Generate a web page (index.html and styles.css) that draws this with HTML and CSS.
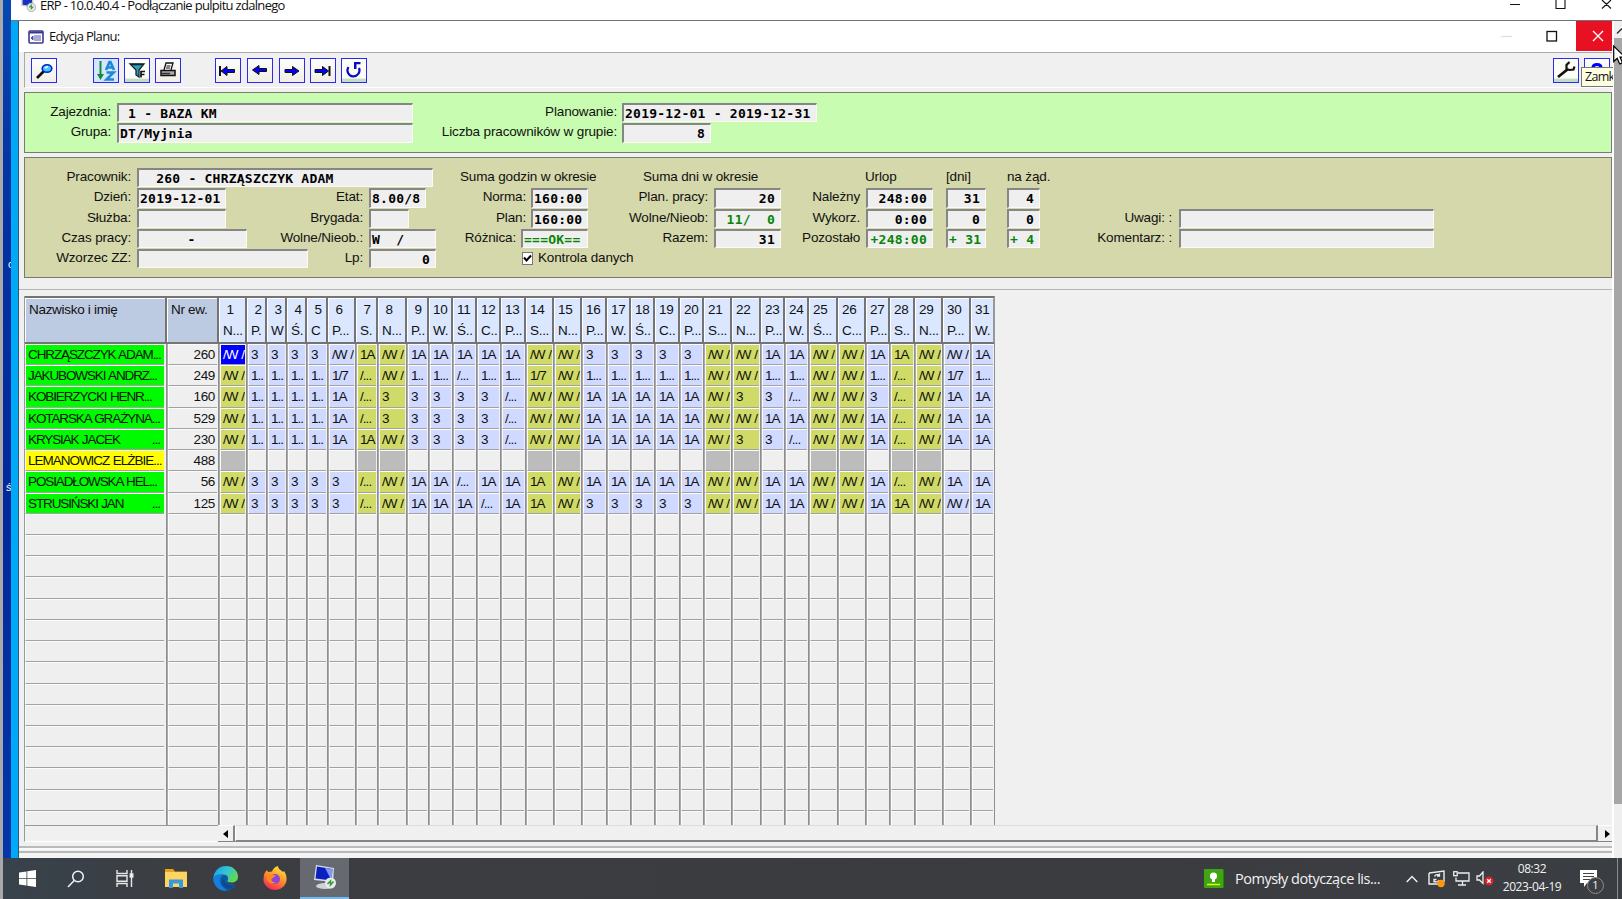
FILE: index.html
```html
<!DOCTYPE html>
<html lang="pl">
<head>
<meta charset="utf-8">
<title>ERP - Edycja Planu</title>
<link rel="stylesheet" href="styles.css">
</head>
<body>
<div class="screen">
  <div class="desktop">
    <div class="edge-gray"></div>
    <div class="wallpaper"><span class="wp-letter wp-a">c</span><span class="wp-letter wp-b">ś</span></div>
    <div class="rdp">
      <header class="rdp-title">
        <svg class="rdp-icon" width="16" height="16" viewBox="0 0 24 24"><path d="M2 1l18 3v13L2 15z" fill="#c8cdd8"/><path d="M4 3l14 3v9L4 13z" fill="#1b2fc4"/><circle cx="17" cy="17" r="6.5" fill="#e4e9e4" stroke="#999"/><path d="M14 17l3-3v5l3-3" fill="none" stroke="#2d9b3c" stroke-width="1.6"/></svg>
        <span class="rdp-text">ERP - 10.0.40.4 - Podłączanie pulpitu zdalnego</span>
        <svg class="rdp-buttons" width="112" height="20" viewBox="0 0 112 20" fill="none" stroke="#111" stroke-width="1.1"><path d="M5 4.500h10M51 -1v9.500h9v-9.500M97 0l9 8.500M106 0l-9 8.500"/></svg>
      </header>
      <div class="session">
        <div class="cyan"></div>
        <main class="app">
          <header class="app-title">
            <svg width="16" height="14" viewBox="0 0 16 14"><rect x="1" y="1" width="14" height="12" rx="1" fill="#fff" stroke="#3a3a94" stroke-width="1.6"/><path d="M1 2.500h14" stroke="#3a3a94" stroke-width="2"/><path d="M3 8l2-2v4zM6 6h7M6 8h7M6 10h7" stroke="#5558a8" fill="#3a3a94"/></svg>
            <span class="app-text">Edycja Planu:</span>
            <svg class="app-min" width="60" height="30" viewBox="0 0 60 30" fill="none"><path d="M1 14.500h11" stroke="#ddd" stroke-width="1.2"/><rect x="47" y="9.500" width="9.500" height="9.500" stroke="#111" stroke-width="1.3"/></svg>
            <div class="app-close"><svg width="12" height="12" viewBox="0 0 12 12"><path d="M1 1l10 10M11 1L1 11" stroke="#fff" stroke-width="1.3"/></svg></div>
          </header>

          <nav class="toolbar">
            <button class="tool t1"><svg viewBox="0 0 22 22"><path d="M4 18l7-7" stroke="#111" stroke-width="2.600"/><ellipse cx="14" cy="8.500" rx="4.800" ry="3.800" fill="#3cf" stroke="#0a1fd0" stroke-width="1.600"/><path d="M12 8l3-1.500" stroke="#fff" stroke-width="1.500"/></svg></button>
            <button class="tool t2 blue"><svg viewBox="0 0 22 22"><path d="M5.500 1v15" stroke="#168a3a" stroke-width="2"/><path d="M2 14h7l-3.500 6z" fill="#168a3a"/><path d="M11 10l3.500-8h1L19 10M12.500 7.500h5M11.500 12.500h7l-7 7h7.500" fill="none" stroke="#1e88d8" stroke-width="2.600"/></svg></button>
            <button class="tool t3 foot"><svg viewBox="0 0 22 22"><path d="M4 4h14l-5 6v7l-3-2v-5z" fill="#2ba0b8" stroke="#123" stroke-width="1.300"/><path d="M5 4.500h12" stroke="#123" stroke-width="1.600"/><path d="M15 17.500v-6h4M15 14.500h3.500" fill="none" stroke="#111" stroke-width="1.700"/></svg></button>
            <button class="tool t4"><svg viewBox="0 0 22 22"><path d="M7 10l2-7h7l-2 7" fill="#fff" stroke="#111" stroke-width="1.300"/><path d="M9.500 6h4M9 8h4" stroke="#111"/><path d="M4 10.500h14v5H4z" fill="#aaa" stroke="#111" stroke-width="1.500"/><path d="M5 13.500h8" stroke="#333" stroke-width="1.500"/></svg></button>
            <button class="tool t5"><svg viewBox="0 0 22 22"><path d="M3 6v10" stroke="#111" stroke-width="2"/><path d="M4 11l6-4.500v3h7.500v3H10v3z" fill="#00f" stroke="#111" stroke-width="1"/></svg></button>
            <button class="tool t6"><svg viewBox="0 0 22 22"><path d="M3.500 10l6.500-4.500v3h7.500v3H10v3z" fill="#00f" stroke="#111" stroke-width="1"/></svg></button>
            <button class="tool t7"><svg viewBox="0 0 22 22"><path d="M18 11l-6.500-4.500v3H4v3h7.500v3z" fill="#00f" stroke="#111" stroke-width="1"/></svg></button>
            <button class="tool t8"><svg viewBox="0 0 22 22"><path d="M17.500 6v10" stroke="#111" stroke-width="2"/><path d="M16.500 11l-6-4.500v3H3v3h7.500v3z" fill="#00f" stroke="#111" stroke-width="1"/></svg></button>
            <button class="tool t9 foot"><svg viewBox="0 0 22 22"><path d="M5.500 7a6 6 0 1 0 10.500 1" fill="none" stroke="#0a0ac8" stroke-width="2.200"/><path d="M11 2h6.500v2.200h-4V9H11z" fill="#0a0ac8"/></svg></button>
            <button class="tool t10 foot"><svg viewBox="0 0 22 22"><path d="M3 17l10-8" stroke="#111" stroke-width="2.800"/><path d="M14.500 2l-3 3v4l3 1 4-.500 1-3" fill="none" stroke="#111" stroke-width="2.200"/></svg></button>
            <button class="tool t11"><svg viewBox="0 0 22 22"><path d="M7 9V7.500c0-4 8-4 8 0V10l-4 3" fill="none" stroke="#00f" stroke-width="3"/></svg></button>
            <div class="tooltip">Zamk</div>
          </nav>

          <section class="panel green">
            <div class="group g-depot">
              <div class="row"><label>Zajezdnia:</label><output class="f w296"> 1 - BAZA KM</output></div>
              <div class="row"><label>Grupa:</label><output class="f w296">DT/Myjnia</output></div>
            </div>
            <div class="group g-plan">
              <div class="row"><label>Planowanie:</label><output class="f w195">2019-12-01 - 2019-12-31</output></div>
              <div class="row"><label>Liczba pracowników w grupie:</label><output class="f w89 r">8</output></div>
            </div>
          </section>

          <section class="panel olive">
            <div class="group g-emp">
              <div class="row"><label>Pracownik:</label><output class="f w296">  260 - CHRZĄSZCZYK ADAM</output></div>
              <div class="row"><label>Dzień:</label><output class="f w89">2019-12-01</output><label class="second">Etat:</label><span class="tail"><output class="f w57">8.00/8</output></span></div>
              <div class="row"><label>Służba:</label><output class="f w89"></output><label class="second">Brygada:</label><span class="tail"><output class="f w40"></output></span></div>
              <div class="row"><label>Czas pracy:</label><output class="f w110 c">-</output><label class="second">Wolne/Nieob.:</label><span class="tail"><output class="f w67">W  /</output></span></div>
              <div class="row"><label>Wzorzec ZZ:</label><output class="f w171"></output><label class="second">Lp:</label><span class="tail"><output class="f w67 r">0</output></span></div>
            </div>
            <div class="group g-hours">
              <div class="row head">Suma godzin w okresie</div>
              <div class="row"><label>Norma:</label><output class="f w57">160:00</output></div>
              <div class="row"><label>Plan:</label><output class="f w57">160:00</output></div>
              <div class="row"><label>Różnica:</label><output class="f w67 ok">===OK==</output></div>
              <div class="row check"><span class="box"><svg width="9" height="9" viewBox="0 0 9 9"><path d="M1 3.500l2.500 3L8 1.500" fill="none" stroke="#000" stroke-width="2"/></svg></span><label>Kontrola danych</label></div>
            </div>
            <div class="group g-days">
              <div class="row head">Suma dni w okresie</div>
              <div class="row"><label>Plan. pracy:</label><output class="f w67 r">20</output></div>
              <div class="row"><label>Wolne/Nieob:</label><output class="f w67 r ok">11/  0</output></div>
              <div class="row"><label>Razem:</label><output class="f w67 r">31</output></div>
            </div>
            <div class="group g-leave">
              <div class="row head">Urlop</div>
              <div class="row"><label>Należny</label><output class="f w67 r">248:00</output></div>
              <div class="row"><label>Wykorz.</label><output class="f w67 r">0:00</output></div>
              <div class="row"><label>Pozostało</label><output class="f w67 r ok">+248:00</output></div>
            </div>
            <div class="group g-dni">
              <div class="row head">[dni]</div>
              <div class="row"><output class="f w40 r">31</output></div>
              <div class="row"><output class="f w40 r">0</output></div>
              <div class="row"><output class="f w40 r ok">+ 31</output></div>
            </div>
            <div class="group g-zad">
              <div class="row head">na żąd.</div>
              <div class="row"><output class="f w33 r">4</output></div>
              <div class="row"><output class="f w33 r">0</output></div>
              <div class="row"><output class="f w33 r ok">+ 4</output></div>
            </div>
            <div class="group g-notes">
              <div class="row"><label>Uwagi: :</label><output class="f w255"></output></div>
              <div class="row"><label>Komentarz: :</label><output class="f w255"></output></div>
            </div>
          </section>

          <section class="grid-area">
            <div class="plan" id="plan"></div>
            <div class="hscroll">
              <div class="hs-left"></div>
              <div class="hs-arrow"><svg width="5" height="8" viewBox="0 0 5 8"><path d="M5 0v8L0 4z"/></svg></div>
              <div class="hs-thumb"></div>
              <div class="hs-arrow last"><svg width="5" height="8" viewBox="0 0 5 8"><path d="M0 0v8l5-4z"/></svg></div>
            </div>
          </section>
          <div class="status"></div>
        </main>
        <div class="vscroll">
          <div class="vs-up"><svg width="8" height="6" viewBox="0 0 8 6"><path d="M3 5.500l5-5" fill="none" stroke="#333" stroke-width="1.500"/></svg></div>
          <div class="vs-thumb"></div>
        </div>
      </div>
    </div>
  </div>

  <footer class="taskbar">
    <div class="tb tb-start"><svg width="17" height="17" viewBox="0 0 17 17" fill="#fff"><path d="M0 2.400l7.500-1V8H0zM8.300 1.300L17 0v8H8.300zM0 8.800h7.500v6.700L0 14.500zM8.300 8.800H17V17l-8.700-1.300z"/></svg></div>
    <div class="tb tb-search"><svg width="18" height="18" viewBox="0 0 18 18" fill="none" stroke="#f2f2f2" stroke-width="1.500"><circle cx="11" cy="6.500" r="5.300"/><path d="M7.200 10.500L1 17"/></svg></div>
    <div class="tb tb-view"><svg width="18" height="17" viewBox="0 0 18 17" fill="none" stroke="#e8e8e8" stroke-width="1.400"><path d="M1 0v3.500h10V0M1 17v-3.500h10V17M1 5.800h10v5.400H1zM15.500 0v17"/><rect x="14.300" y="4" width="2.500" height="3" fill="#fff"/></svg></div>
    <div class="tb tb-folder"><svg width="22" height="19" viewBox="0 0 22 19"><path d="M0 0h8l2 2.500h12V18H0z" fill="#e8a317"/><path d="M0 3h22v15H0z" fill="#fcd462"/><path d="M4 19v-8.500h14V19h-4v-4.500H8V19z" fill="#3b97dc"/></svg></div>
    <div class="tb tb-edge"><svg width="25" height="25" viewBox="0 0 25 25"><defs><linearGradient id="eg" x1="0" y1="0" x2="1" y2="0.500"><stop offset="0" stop-color="#1a9de0"/><stop offset=".55" stop-color="#33c3d6"/><stop offset="1" stop-color="#60d850"/></linearGradient></defs><circle cx="12.500" cy="12.500" r="12.300" fill="#0c59a4"/><path d="M14 17l10.500 2a12 12 0 0 0 .5-4l-9 1z" fill="#3b3c40"/><path d="M.5 11C2 3 8 0 13 0c7 0 12 5 12 10.500 0 4-3 6-6.500 6-3 0-4.500-1-4-2 1.500-2 .5-6-4-6C5 8.500 1 11 .5 13z" fill="url(#eg)"/><path d="M.3 12C2 8 7 7.500 10 9c-4 2-4 9 0 12 1.500 1.700 4 3 4 3.500C6 26 0 19 .3 12z" fill="#1580dc"/><path d="M12 11c-3 5 2 10 10.500 7.500-1 1.500-3 3-4.500 4C11 24 6 16 12 11z" fill="#12478a"/></svg></div>
    <div class="tb tb-fox"><svg width="24" height="24" viewBox="0 0 24 24"><defs><linearGradient id="fg" x1=".8" y1="0" x2=".3" y2="1"><stop offset="0" stop-color="#ffe94a"/><stop offset=".45" stop-color="#ff9a25"/><stop offset="1" stop-color="#f5225c"/></linearGradient></defs><path d="M1 9c.5-2 1.500-3.500 3-5l1 2 4-.500c1-3 3-4.500 6-5.500 0 3 3 4 5 6l1-1c2 3 3 6 2.500 9.500C22.500 20 18 24 12 24S0 19 .5 13z" fill="url(#fg)"/><circle cx="12" cy="13" r="5" fill="#8b45d8"/><path d="M4 9c4-2 6 0 9 .500-1 1.500-3 1.500-3.500 3C7 13 9 17 13 16c-5 4-11-1-9-7z" fill="#ff8a1c"/></svg></div>
    <div class="tb tb-rdp"><svg width="24" height="25" viewBox="0 0 24 25"><ellipse cx="12" cy="21" rx="9" ry="3" fill="#cfd2d8"/><path d="M3 0l18 3-1 14L1 15z" fill="#d9dde6"/><path d="M4 1.500L19.500 4l-1 11.500L2.500 13.500z" fill="#0a1fc0"/><path d="M12 3l7.500 1-1 11.500z" fill="#7d9af0"/><circle cx="17.500" cy="18" r="5.500" fill="#e6ebe6"/><path d="M14.500 19l3-3v4l3-3.500" fill="none" stroke="#2d9b3c" stroke-width="1.500"/></svg></div>
    <div class="tb-news"><svg width="22" height="20" viewBox="0 0 22 20"><path d="M18 3l3 1v14l-3 1z" fill="#155c10"/><rect width="19.500" height="19" rx="1" fill="#3fa513"/><circle cx="9.500" cy="7" r="3.600" fill="#fff"/><path d="M8 9h3v4H8z" fill="#fff"/><path d="M3 15.500h13" stroke="#e6f40c" stroke-width="1.500"/></svg><span>Pomysły dotyczące lis...</span></div>
    <div class="tray">
      <svg class="tr-up" width="12" height="8" viewBox="0 0 12 8"><path d="M.7 7L6 1.500 11.300 7" fill="none" stroke="#eee" stroke-width="1.500"/></svg>
      <svg class="tr-sync" width="18" height="18" viewBox="0 0 18 18"><path d="M1 3l15-2v11M1 3v11h9" fill="none" stroke="#eee" stroke-width="1.400"/><path d="M11.500 5.500a3 3 0 0 0-5 1M6 11a3 3 0 0 0 5-1M11.500 3.500v2.500H9M6 12.500V9.500h2.500" fill="none" stroke="#eee" stroke-width="1.300"/><circle cx="13" cy="13.500" r="3.700" fill="#ff9610"/></svg>
      <svg class="tr-net" width="17" height="15" viewBox="0 0 17 15" fill="none" stroke="#eee" stroke-width="1.300"><path d="M5 2h11v8H3V6.500M5 14h8M9.500 10v4"/><rect x=".7" y=".7" width="3.500" height="4"/></svg>
      <svg class="tr-snd" width="18" height="15" viewBox="0 0 18 15"><path d="M1 5h2.500L7 1v11.500L3.500 9H1z" fill="none" stroke="#eee" stroke-width="1.300"/><circle cx="13" cy="10" r="4.500" fill="#d8232f"/><path d="M11.200 8.200l3.600 3.600M14.800 8.200l-3.600 3.600" stroke="#fff" stroke-width="1.300"/></svg>
    </div>
    <div class="clock"><span>08:32</span><span>2023-04-19</span></div>
    <div class="notif"><svg width="17" height="18" viewBox="0 0 17 18"><path d="M0 0h17v13H7l-3 4v-4H0z" fill="#fff"/><path d="M3 3.500h11M3 6.500h11M3 9.500h8" stroke="#444" stroke-width="1.200"/></svg><span class="badge">1</span></div>
    <div class="peek"></div>
  </footer>
  <svg class="cursor" width="12" height="20" viewBox="0 0 12 20"><path d="M.7 1v15.500l3.500-3.300 2.500 5.800 2.800-1.200-2.500-5.600h5z" fill="#fff" stroke="#000" stroke-width="1.200"/></svg>
</div>
<script src="plan.js"></script>
</body>
</html>
```
FILE: styles.css
```css
* { box-sizing: border-box; }
body { margin: 0; overflow: hidden; font-family: "Liberation Sans", Arial, sans-serif; font-size: 13.5px; color: #111; }
.screen { position: relative; width: 1622px; height: 899px; display: flex; flex-direction: column; overflow: hidden; background: #a9a9a9; }
.desktop { display: flex; height: 858px; }
.edge-gray { width: 3px; background: #a9a9a9; }
.wallpaper { position: relative; width: 8px; background: linear-gradient(#0548b4, #0433a2 20%, #02299a 60%, #0436a8); overflow: hidden; color: #fff; font-size: 11px; }
.wp-letter { position: absolute; left: 5px; }
.wp-a { top: 258px; }
.wp-b { top: 481px; left: 3px; }
.rdp { flex: 1; display: flex; flex-direction: column; min-width: 0; }
.rdp-title { height: 21px; background: #fff; border-bottom: 1px solid #70757a; display: flex; align-items: flex-start; padding-left: 9px; overflow: hidden; }
.rdp-icon { margin-top: -4px; }
.rdp-text { margin: -4px auto 0 4px; font: 13px/18px "Open Sans", "Noto Sans", sans-serif; letter-spacing: -0.690px; white-space: nowrap; }
.rdp-buttons { margin-right: 5px; flex: none; }
.session { flex: 1; display: flex; min-height: 0; }
.cyan { width: 8px; background: #00a8f8; border-right: 1px solid #35566b; }
.app { width: 1593px; background: #f0f0f0; display: flex; flex-direction: column; }
.app-title { height: 31px; flex: none; background: #fff; display: flex; align-items: center; padding-left: 9px; }
.app-text { margin: -2px auto 0 5px; font: 13px/18px "Open Sans", "Noto Sans", sans-serif; letter-spacing: -0.700px; }
.app-min { margin-right: 16px; }
.app-close { width: 36px; height: 30px; align-self: flex-start; background: #e81123; display: flex; align-items: center; padding-left: 16px; }

.toolbar { position: relative; height: 36px; flex: none; margin-left: 5px; border-top: 1px solid #aaa; border-left: 1px solid #aaa; border-bottom: 1px solid #fff; display: flex; padding: 5px 2px 0 6px; }
.tool { width: 26px; height: 25px; flex: none; padding: 1px; border: 1.5px solid #2a2af0; background: linear-gradient(#fdfdfb, #f0eee6); }
.tool svg { display: block; width: 22px; height: 22px; }
.blue { background: #d4e6fa; }
.foot { background: linear-gradient(#fdfdf8 84%, #c2dcc6 86%); }
.t2 { margin-left: 36px; }
.t3 { margin-left: 5px; }
.t4 { margin-left: 5px; }
.t7, .t8 { margin-left: 5.500px; }
.t9 { margin-left: 5px; }
.t5 { margin-left: 34px; }
.t6 { margin-left: 6px; }
.t10 { margin-left: auto; }
.t11 { margin-left: 5px; }
.tooltip { position: absolute; left: 1556px; top: 14px; width: 32px; height: 20px; border: 1px solid #777; border-right: 0; background: #ffffe1; font: 12.500px/18px "Open Sans", "Noto Sans", sans-serif; letter-spacing: -0.700px; padding-left: 3px; overflow: hidden; }

.panel { flex: none; margin-left: 5px; border: 1px solid #7a7a70; display: flex; }
.green { height: 61px; margin-top: 4px; background: #c8fcb0; padding-top: 10px; }
.olive { height: 121px; margin-top: 4px; background: #d5d8aa; padding-top: 10px; }
.group { display: flex; flex-direction: column; flex: none; }
.row { height: 20.300px; display: flex; align-items: flex-start; white-space: nowrap; }
.row label, .head { letter-spacing: -0.150px; line-height: 17.500px; }
.row label { text-align: right; }
.f { display: block; flex: none; height: 19.300px; border: 1px solid; border-width: 2px 1px 1px 2px; border-color: #868686 #fbfbf4 #fbfbf4 #868686; background: #efefef; padding: 0 3px 0 1px; font: bold 13px/17px "DejaVu Sans Mono", monospace; letter-spacing: 0.24px; white-space: pre; overflow: hidden; color: #000; }
.r { text-align: right; padding-right: 5px; }
.c { text-align: center; }
.ok { color: #078507; }
.w296 { width: 296px; } .w255 { width: 255px; } .w195 { width: 195px; } .w171 { width: 171px; }
.w110 { width: 110px; } .w89 { width: 89px; } .w67 { width: 67px; } .w57 { width: 57px; } .w40 { width: 40px; } .w33 { width: 33px; }
.g-depot label { width: 86px; margin-right: 6px; }
.g-plan { width: 410px; }
.g-plan label { flex: none; width: 204px; margin-right: 5px; }
.g-emp { width: 412px; }
.g-emp label:first-child { width: 106px; margin-right: 6px; }
.g-emp .second { flex: 1; margin-right: 6px; }
.tail { width: 68px; }
.g-hours { width: 151px; }
.g-hours .row, .g-days .row, .g-leave .row { justify-content: flex-end; gap: 5px; }
.g-hours .row { gap: 5px; }
.g-hours .head, .g-days .head { justify-content: flex-start; padding-left: 23px; }
.g-hours .check { justify-content: flex-start; padding-left: 85px; }
.box { width: 13px; height: 13px; margin-top: 3px; background: #fff; border: 1px solid #777; border-width: 1.500px 1px 1px 1.500px; display: flex; align-items: center; justify-content: center; }
.g-days { width: 193px; }
.g-days .row { gap: 6px; }
.g-days .head { padding-left: 55px; }
.g-leave { width: 152px; }
.g-leave .row { gap: 6px; }
.g-leave .head { justify-content: flex-start; padding-left: 84px; }
.g-dni { margin-left: 13px; width: 40px; }
.g-zad { margin-left: 21px; width: 43px; }
.g-notes { margin-left: 31px; padding-top: 40.600px; }
.g-notes label { width: 91px; margin-right: 7px; }

.grid-area { flex: none; margin-top: 11px; height: 554px; border-top: 1px solid #b4b4b4; padding: 6px 0 0 5px; }
.plan { display: flex; height: 529px; width: 971px; border-left: 1px solid #999; overflow: hidden; }
.col { flex: none; display: flex; flex-direction: column; overflow: hidden; }
.th { height: 48px; flex: none; border: 2px solid #747474; border-width: 2px 2px 2px 0; background: #dbe7ff; box-shadow: inset 1px 1px #fff; padding: 1px 0 0 4px; line-height: 21px; white-space: pre; overflow: hidden; letter-spacing: -0.3px; }
.wide .th { background: #bccae2; }
.cells { flex: 1; overflow: hidden; border-right: 1px solid #8e8e8e; padding-right: 1px; border-left: 1px solid #aaa; }
.col:first-child .cells { border-left: 0; padding-right: 2px; }
.td { height: 21.230px; border-top: 1px solid #fbfbfb; border-left: 1px solid #fbfbfb; border-bottom: 1px solid #a2a2a2; padding-left: 2px; line-height: 20px; white-space: pre; overflow: hidden; letter-spacing: -0.95px; word-spacing: 0.8px; background-clip: padding-box; background-color: #efefef; }
.col:last-child .th { border-right-color: #999; }
.work { background-color: #d0d9ff; }
.free { background-color: #d0da66; }
.void { background-color: #bcbcbc; }
.sel { background-color: #0000fa; color: #fff; }
.name { background-color: #00fa00; display: flex; letter-spacing: -1.120px; }
.name .dots { margin-left: auto; margin-right: 4px; letter-spacing: -1px; }
.absent { background-color: #ffff00; letter-spacing: -1.020px; }
.num { text-align: right; padding-right: 2px; letter-spacing: -0.35px; }
.hscroll { display: flex; height: 17px; }
.hs-left { width: 194px; border-left: 1px solid #999; border-top: 1px solid #999; border-bottom: 1px solid #fff; }
.hs-arrow { width: 17px; display: flex; align-items: center; justify-content: center; border-right: 2px solid #858585; border-bottom: 1.500px solid #858585; border-top: 1px solid #fff; }
.hs-thumb { flex: 1; border-bottom: 2px solid #858585; border-right: 2px solid #858585; border-top: 1px solid #dcdcdc; border-left: 1px solid #fff; }
.last { width: 14px; padding-left: 4px; border-right: 0; }
.status { flex: 1; margin-top: 3px; border-top: 2px solid #bbb; background: linear-gradient(#fafafa 0 2px, #f0f0f0 2px 3px, #b8b8b8 3px 5px, #f4f4f4 5px); }
.vscroll { flex: 1; display: flex; flex-direction: column; background: #efefef; border-left: 2px solid #fff; }
.vs-up { height: 17px; padding-top: 1px; overflow: hidden; }
.vs-thumb { height: 766px; background: #a6a6a6; }

.taskbar { height: 41px; margin-left: 3px; background: linear-gradient(90deg, #38424b, #3c3d41 12%, #3b3c40 70%, #3a3e43); display: flex; color: #f2f2f2; font-family: "Open Sans", "Noto Sans", sans-serif; }
.tb { display: flex; align-items: center; justify-content: center; width: 49px; }
.tb-start { width: 49px; }
.tb-search { width: 48px; }
.tb-view { width: 49px; }
.tb-folder { width: 53px; }
.tb-edge { width: 49px; padding-right: 3px; }
.tb-fox { width: 49px; padding-right: 2px; padding-bottom: 1px; }
.tb-rdp { width: 49px; background: #66696f; border-bottom: 2px solid #76b9ed; }
.tb-news { width: 183px; margin-left: 855px; display: flex; align-items: center; gap: 9px; font-size: 14.500px; letter-spacing: -0.460px; white-space: nowrap; }
.tb-news svg { flex: none; }
.tray { display: flex; align-items: center; margin-left: 19px; flex: none; }
.tr-sync { margin-left: 10px; }
.tr-net { margin-left: 7px; }
.tr-snd { margin-left: 6px; }
.clock { width: 70px; margin-left: 3px; display: flex; flex-direction: column; text-align: center; font-size: 12px; line-height: 18px; padding-top: 2px; letter-spacing: -0.4px; }
.notif { position: relative; width: 26px; margin-left: 13px; padding-top: 12px; }
.badge { position: absolute; left: 7px; top: 19px; width: 17px; height: 17px; border: 1.500px solid #8e8e8e; border-radius: 50%; background: #3d3f42; font-size: 11px; line-height: 14px; text-align: center; }
.peek { width: 1px; margin-left: auto; margin-right: 4px; background: #8b8b8b; }
.cursor { position: absolute; left: 1613px; top: 45px; }
```
FILE: plan.js
```js
const edges = [219,247,267,287,307,328,356,378,407,429,453,477,501,526,554,582,607,631,655,680,704,732,761,785,809,838,866,890,915,943,971,995];
const weekdays = ["N...","P.","W","Ś.","C","P...","S.","N...","P..","W.","Ś..","C..","P...","S...","N...","P...","W.","Ś..","C..","P...","S...","N...","P...","W.","Ś...","C...","P...","S..","N...","P...","W."];
const free = new Set([1, 7, 8, 14, 15, 21, 22, 25, 26, 28, 29]);
const TOTAL_ROWS = 23;

// Shift codes, one letter per day
const codes = { w: "/W /", A: "1A", d: "/...", o: "1...", s: "1..", h: "1/7", 3: "3", "-": "" };
const people = [
  ["CHRZĄSZCZYK ADAM...", "", 260, "w3333wAwAAAAAww33333wwAAwwAAwwA"],
  ["JAKUBOWSKI ANDRZ...", "", 249, "wsssshdwsodoohwooooowwoowwodwho"],
  ["KOBIERZYCKI HENR...", "", 160, "wssssAd33333dwwAAAAAw33dww3dwAA"],
  ["KOTARSKA GRAŻYNA", "...", 529, "wssssAd33333dwwAAAAAwwAAwwAdwAA"],
  ["KRYSIAK JACEK", "...", 230, "wssssAAw3333dwwAAAAAw33dwwAdwAA"],
  ["LEMANOWICZ ELŻBIE...", "", 488, "-------------------------------"],
  ["POSIADŁOWSKA HEL...", "", 56, "w33333dwAAdAAAwAAAAAwwAAwwAdwAA"],
  ["STRUSIŃSKI JAN", "...", 125, "w33333dwAAAdAAw33333wwAAwwAAwwA"]
];

function el(cls, text) {
  const e = document.createElement("div");
  e.className = cls;
  if (text !== undefined) e.textContent = text;
  return e;
}

function column(width, header, cls, cellFor) {
  const col = el("col " + cls);
  col.style.width = width + "px";
  col.append(el("th", header));
  const cells = el("cells");
  for (let i = 0; i < TOTAL_ROWS; i++) {
    cells.append(i < people.length ? cellFor(people[i], i) : el("td"));
  }
  col.append(cells);
  return col;
}

const plan = document.getElementById("plan");
plan.append(column(142, "Nazwisko i imię", "wide", (p, i) => {
  const c = el("td name" + (i === 5 ? " absent" : ""), p[0]);
  if (p[1]) c.append(el("dots", p[1]));
  return c;
}));
plan.append(column(52, "Nr ew.", "wide", p => el("td num", String(p[2]))));
weekdays.forEach((w, k) => {
  const day = k + 1;
  plan.append(column(edges[k + 1] - edges[k], String(day).padStart(2, " ") + "\n" + w, "", (p, i) => {
    let kind = free.has(day) ? "free" : "work";
    if (i === 5) kind = free.has(day) ? "void" : "";
    if (i === 0 && day === 1) kind = "sel";
    return el("td " + kind, codes[p[3][k]]);
  }));
});
```
